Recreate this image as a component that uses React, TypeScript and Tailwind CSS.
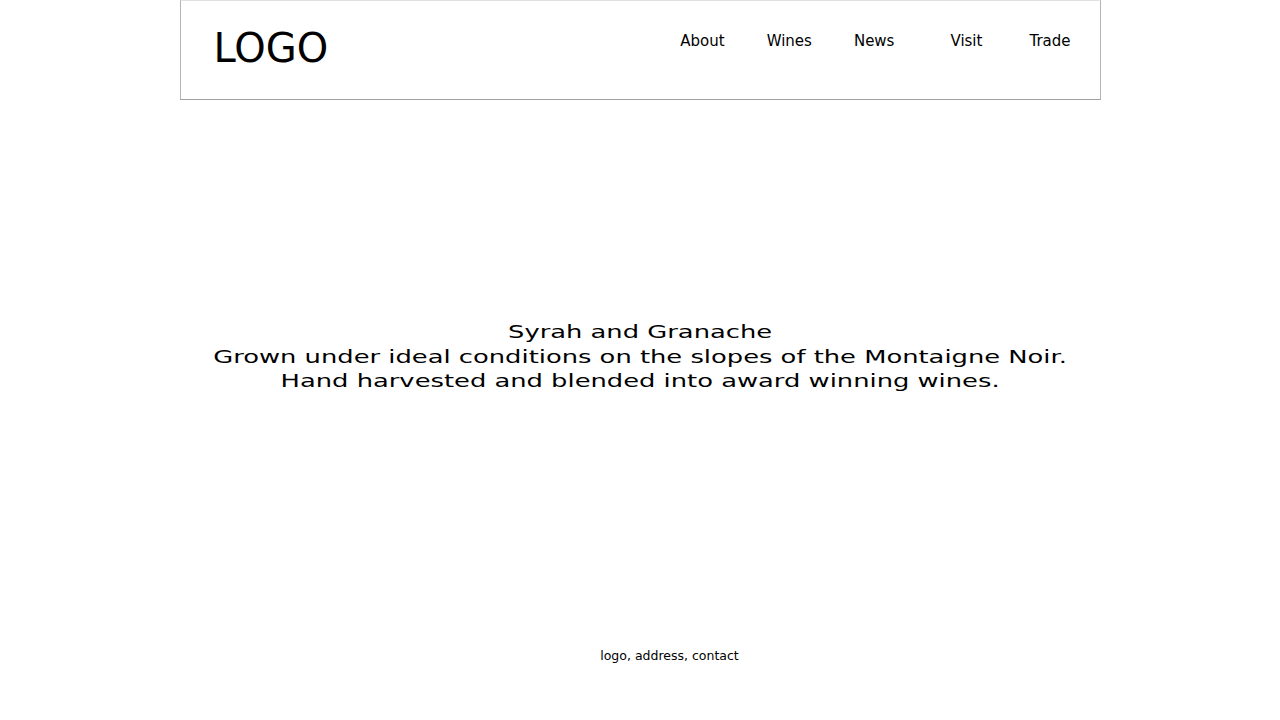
import React from "react";

export default function App() {
  const font = { fontFamily: '"DejaVu Sans", sans-serif' };
  return (
    <div className="w-[1280px] h-[720px] bg-white text-black flex flex-col items-center" style={font}>
      <header className="w-[921px] h-[100px] shrink-0 border border-t-[#e0e0e0] border-x-[#b4b4b4] border-b-[#a0a0a0] flex items-start">
        <div className="pl-[33px] pt-[22px] text-[40px] leading-[50px]">LOGO</div>
        <nav className="ml-auto flex pt-[30px] pr-[29px] text-[15px] leading-[20px]">
          <span>About</span>
          <span className="ml-[42px]">Wines</span>
          <span className="ml-[42px]">News</span>
          <span className="ml-[56px]">Visit</span>
          <span className="ml-[47px]">Trade</span>
        </nav>
      </header>
      <main className="h-[512px] w-full flex items-center justify-center">
        <div className="text-center text-[18px] leading-[24.5px] scale-x-[1.432] pt-[2px]">
          <div>Syrah and Granache</div>
          <div>Grown under ideal conditions on the slopes of the Montaigne Noir.</div>
          <div>Hand harvested and blended into award winning wines.</div>
        </div>
      </main>
      <footer className="pt-[36px] pl-[59px] text-[12.5px] leading-[16px]">logo, address, contact</footer>
    </div>
  );
}
